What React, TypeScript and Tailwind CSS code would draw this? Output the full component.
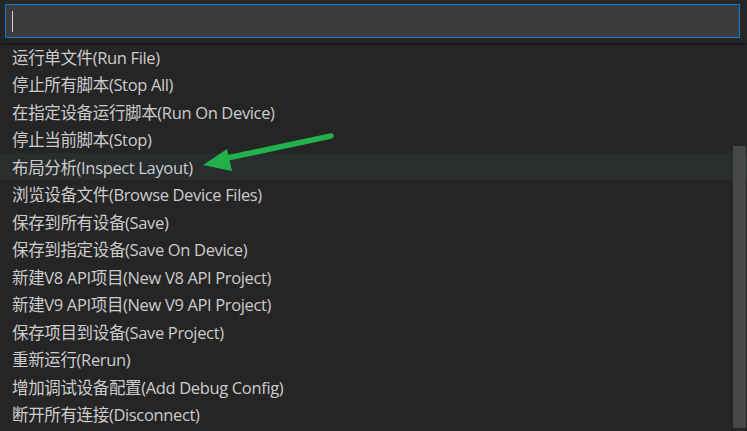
const items = [
  '运行单文件(Run File)',
  '停止所有脚本(Stop All)',
  '在指定设备运行脚本(Run On Device)',
  '停止当前脚本(Stop)',
  '布局分析(Inspect Layout)',
  '浏览设备文件(Browse Device Files)',
  '保存到所有设备(Save)',
  '保存到指定设备(Save On Device)',
  '新建V8 API项目(New V8 API Project)',
  '新建V9 API项目(New V9 API Project)',
  '保存项目到设备(Save Project)',
  '重新运行(Rerun)',
  '增加调试设备配置(Add Debug Config)',
  '断开所有连接(Disconnect)',
]

const active = 4

export default function App() {
  return (
    <div
      className="relative h-[431px] w-[747px] overflow-hidden bg-[#252526] text-[#cccccc]"
      style={{ fontFamily: '"Open Sans", "Noto Sans CJK SC", sans-serif' }}
    >
      {/* input header */}
      <div className="relative z-10 h-[42.5px] bg-[#252526] px-[5px] pt-[4px] shadow-[0_1px_3px_rgba(0,0,0,0.55)]">
        <div className="flex h-[34px] w-[735px] items-center border border-[#007fd4] bg-[#3c3c3c] px-[6px]">
          <span className="h-[21px] w-px bg-[#d4d4d4]" />
        </div>
      </div>

      <ul>
        {items.map((label, i) => (
          <li
            key={label}
            className={
              'flex h-[27.5px] items-center pl-[12px] pt-[3px] text-[16.5px] leading-none tracking-[-0.35px] ' +
              (i === active ? 'bg-[#2a2d2e]' : '')
            }
          >
            {label}
          </li>
        ))}
      </ul>

      {/* scrollbar */}
      <div className="absolute right-[1px] top-[146px] h-[282px] w-[13px] bg-[#4f4f4f]/80" />

      {/* annotation arrow */}
      <svg className="absolute left-0 top-0" width="747" height="431" viewBox="0 0 747 431">
        <line x1="331" y1="136" x2="218" y2="160" stroke="#21b24b" strokeWidth="5.5" strokeLinecap="round" />
        <polygon points="203,165 227,149 232,171" fill="#21b24b" />
      </svg>
    </div>
  )
}
